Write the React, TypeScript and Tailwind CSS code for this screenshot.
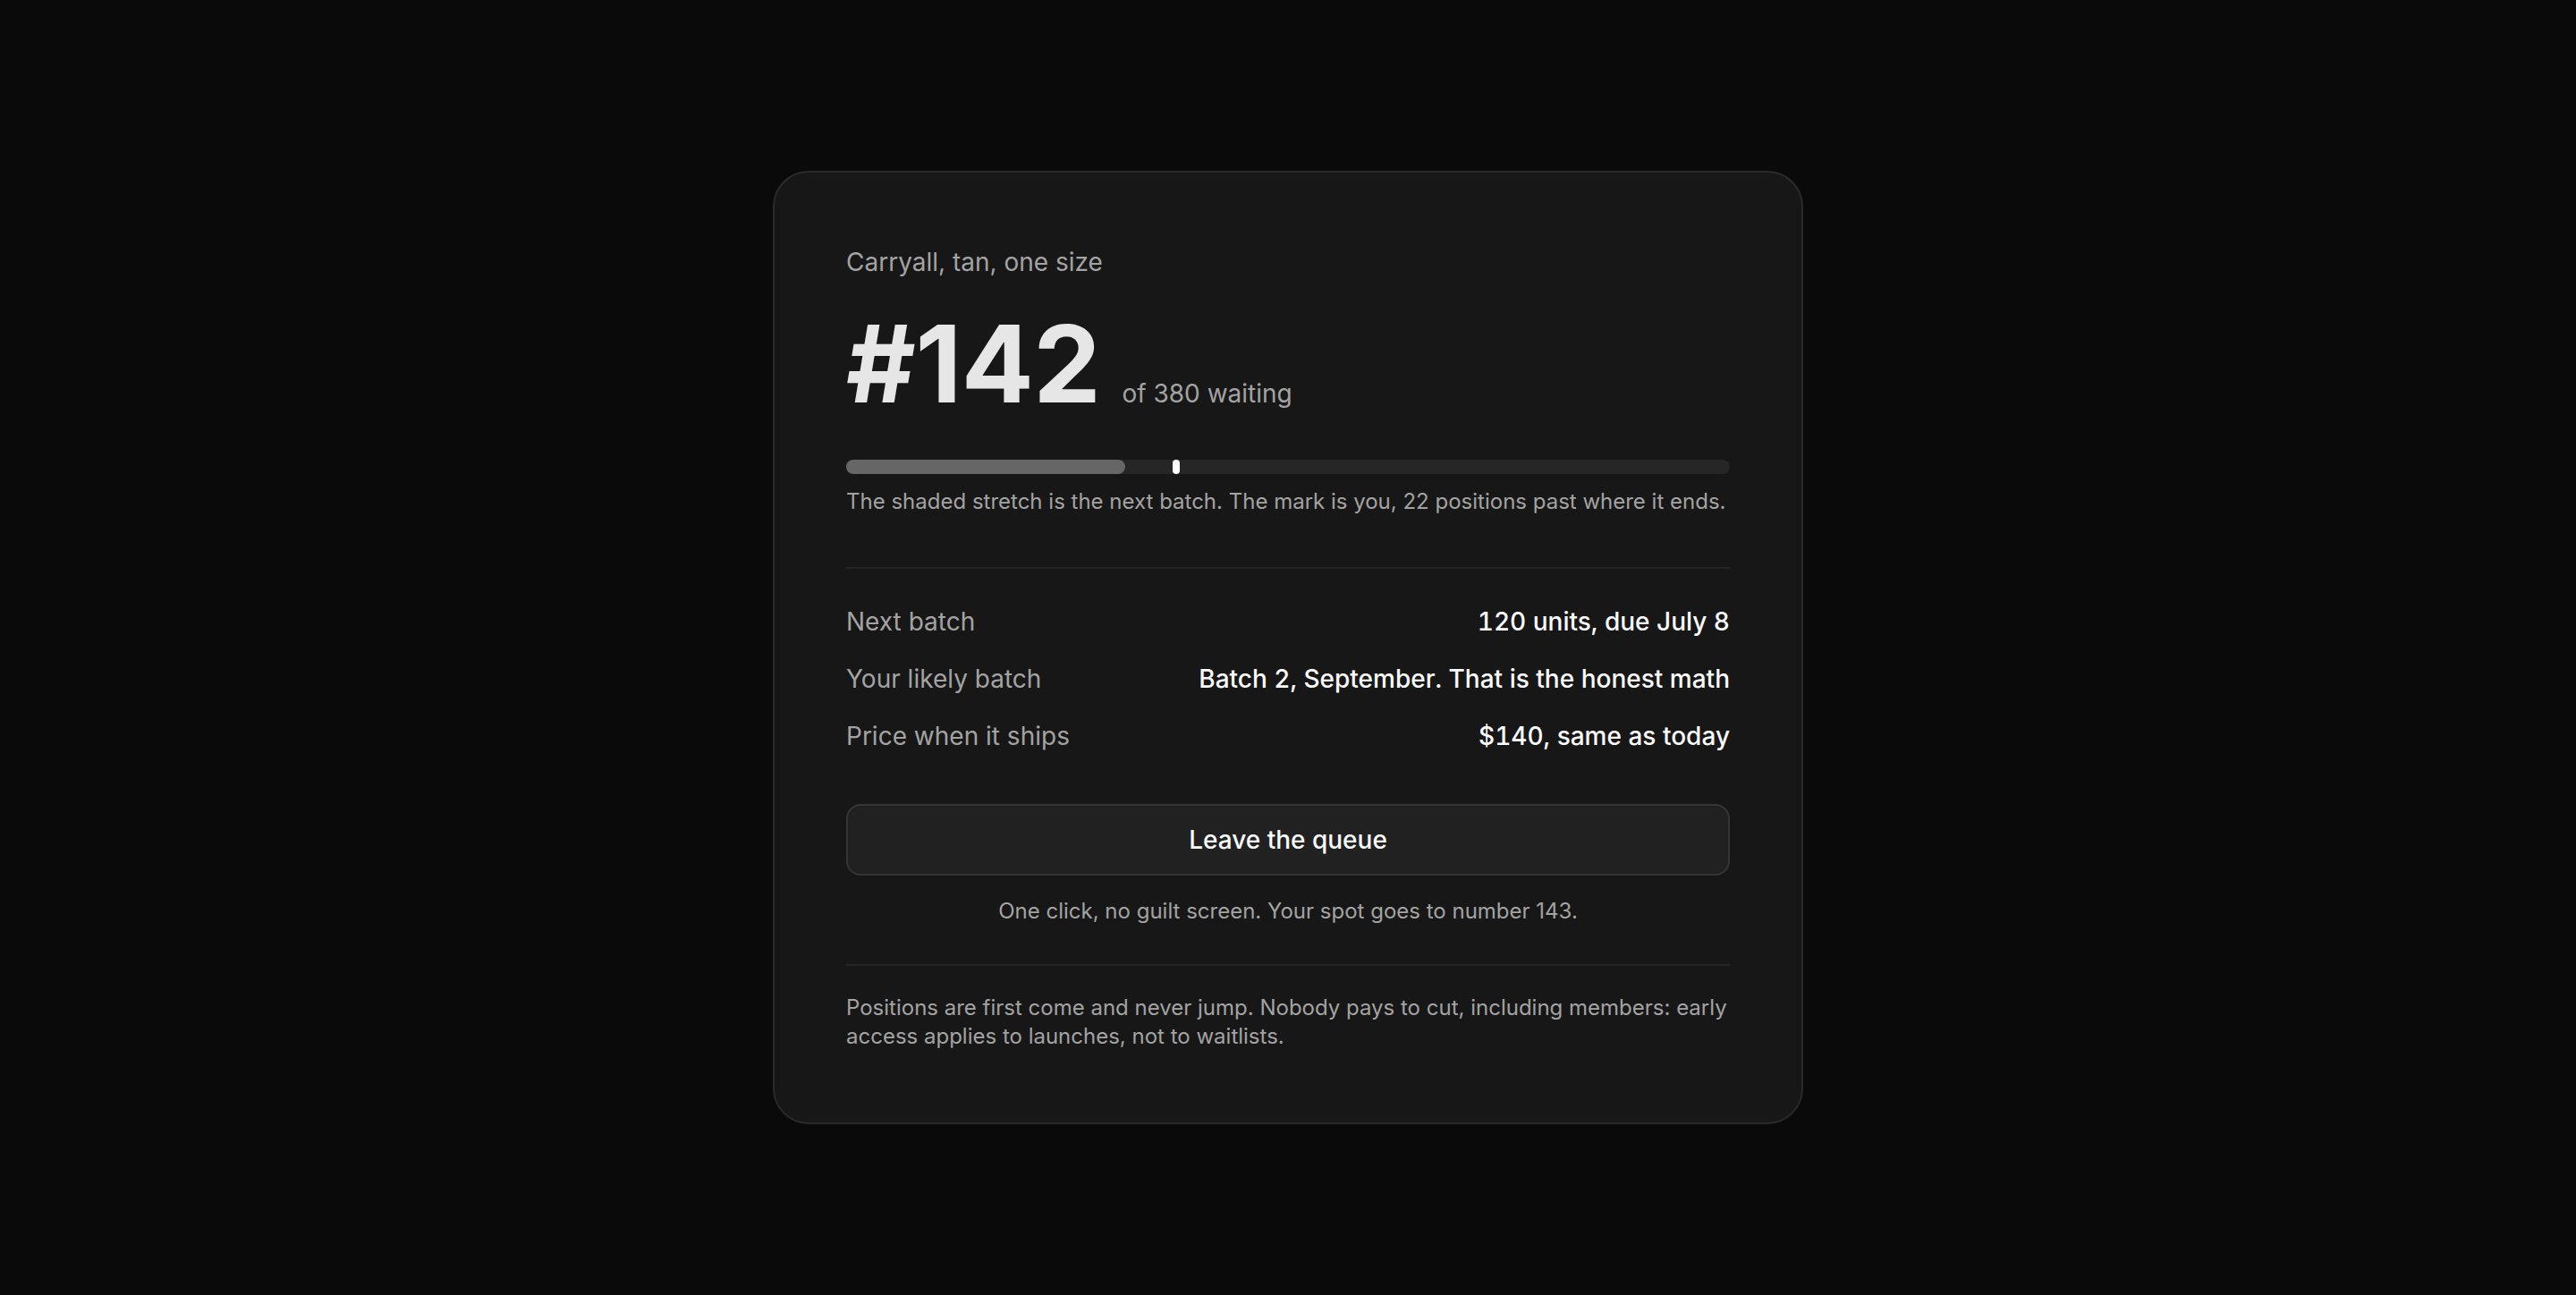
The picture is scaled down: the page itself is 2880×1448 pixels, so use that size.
import { useState } from "react"

const details = [
  { label: "Next batch", value: "120 units, due July 8" },
  { label: "Your likely batch", value: "Batch 2, September. That is the honest math" },
  { label: "Price when it ships", value: "$140, same as today" },
]

const TOTAL = 380
const BATCH = 120
const POSITION = 142

export default function App() {
  const [left, setLeft] = useState(false)

  const batchPct = (BATCH / TOTAL) * 100
  const markPct = (POSITION / TOTAL) * 100

  return (
    <div className="min-h-screen w-full bg-[#0a0a0a] flex items-center justify-center font-['Inter',sans-serif] antialiased">
      <div className="w-[1152px] bg-[#171717] border-2 border-[#2a2a2a] rounded-[40px] p-[80px]">
        <p className="text-[28px] leading-[40px] text-[#a3a3a3]">Carryall, tan, one size</p>

        <div className="mt-[34px] flex items-baseline gap-[24px]">
          <span className="text-[120px] leading-none font-bold tracking-[-0.004em] text-[#e6e6e6]">#{POSITION}</span>
          <span className="text-[28px] leading-[40px] text-[#a3a3a3]">of {TOTAL} waiting</span>
        </div>

        {/* queue bar: shaded stretch is the next batch, the mark is your spot */}
        <div className="relative mt-[47px] h-[16px] w-full rounded-full bg-[#262626]">
          <div className="absolute left-0 top-0 h-full rounded-full bg-[#666666]" style={{ width: `${batchPct}%` }} />
          <div
            className="absolute top-0 h-full w-[8px] -translate-x-1/2 rounded-full bg-white"
            style={{ left: `${markPct}%` }}
          />
        </div>
        <p className="mt-[15px] text-[24px] leading-[32px] text-[#a3a3a3]">
          The shaded stretch is the next batch. The mark is you, {POSITION - BATCH} positions past where it ends.
        </p>

        <div className="mt-[57px] border-t-2 border-[#242424] pt-[39px] flex flex-col gap-[24px]">
          {details.map((row) => (
            <div key={row.label} className="flex items-center justify-between text-[28px] leading-[40px]">
              <span className="text-[#a3a3a3]">{row.label}</span>
              <span className="font-medium tabular-nums text-[#fafafa]">{row.value}</span>
            </div>
          ))}
        </div>

        <button
          onClick={() => setLeft(true)}
          className="mt-[56px] flex h-[80px] w-full items-center justify-center rounded-2xl border-2 border-[#353535] bg-[#212121] text-[28px] leading-[40px] font-medium text-[#fafafa] cursor-pointer hover:bg-[#262626]"
        >
          {left ? "You left the queue" : "Leave the queue"}
        </button>
        <p className="mt-[24px] text-center text-[24px] leading-[32px] text-[#a3a3a3]">
          One click, no guilt screen. Your spot goes to number {POSITION + 1}.
        </p>

        <div className="mt-[43px] border-t-2 border-[#242424] pt-[31px]">
          <p className="text-[24px] leading-[32px] text-[#a3a3a3]">
            Positions are first come and never jump. Nobody pays to cut, including members: early access applies to launches, not to waitlists.
          </p>
        </div>
      </div>
    </div>
  )
}
